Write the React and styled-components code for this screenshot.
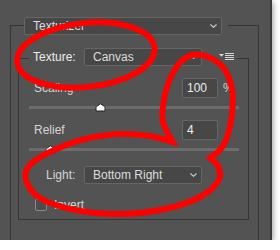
import React from 'react'
import styled, { createGlobalStyle } from 'styled-components'

const GlobalStyle = createGlobalStyle`
  body {
    margin: 0;
    background: #fff;
    font-family: "Liberation Sans", Arial, sans-serif;
  }
`

const LINE = '#363636'
const PANEL = '#535353'

const Panel = styled.div`
  position: relative;
  box-sizing: border-box;
  width: 272px;
  height: 240px;
  padding: 25px 0 0 10px;
  background: ${PANEL};
  border-right: 2px solid #3a3a3a;
  box-shadow: 1px 2px 6px rgba(0, 0, 0, 0.4);
  display: flex;
  flex-direction: column;
  overflow: hidden;
`

const Group = styled.div`
  box-sizing: border-box;
  width: ${p => p.$w}px;
  border: 1px solid ${LINE};
  display: flex;
  flex-direction: column;
  ${p => p.$open ? 'border-bottom: none; flex: 1;' : 'height: 162px; margin: 23px 0 0 7px;'}
`

const Legend = styled.div`
  align-self: flex-start;
  display: flex;
  align-items: center;
  background: ${PANEL};
  margin: ${p => p.$top}px 0 0 ${p => p.$left}px;
  padding: 0 ${p => p.$pr}px 0 ${p => p.$pl}px;
`

const Label = styled.span`
  width: ${p => p.$w}px;
  font-size: 12px;
  color: ${p => p.$bright ? '#ececec' : '#d4d4d4'};
  white-space: nowrap;
`

const Select = styled.div`
  box-sizing: border-box;
  width: ${p => p.$w}px;
  height: 18px;
  display: flex;
  align-items: center;
  justify-content: space-between;
  padding: 0 4px 0 8px;
  background: #474747;
  border: 1px solid #656565;
  border-radius: 2px;
  color: #dcdcdc;
  font-size: 12px;
  white-space: nowrap;
`

const MenuIcon = styled.svg`
  margin-left: 17px;
  display: block;
`

const ParamRow = styled.div`
  display: flex;
  align-items: center;
  height: 20px;
  margin-top: ${p => p.$mt}px;
  padding-left: 15px;
`

const ParamLabel = styled.span`
  flex: 1;
  font-size: 12px;
  color: #d4d4d4;
`

const NumberBox = styled.div`
  box-sizing: border-box;
  width: 36px;
  height: 20px;
  display: flex;
  align-items: center;
  padding-left: 4px;
  background: #474747;
  border: 1px solid #656565;
  border-radius: 1px;
  color: #ececec;
  font-size: 12px;
`

const Unit = styled.span`
  box-sizing: border-box;
  width: 30px;
  padding-left: 5px;
  font-size: 12px;
  color: #d4d4d4;
`

const Track = styled.div`
  position: relative;
  width: 210px;
  height: 3px;
  margin: ${p => p.$mt}px 0 0 10px;
  background: #6c6c6c;
`

const Thumb = styled.svg`
  position: absolute;
  top: -3px;
  left: ${p => p.$x}px;
`

const LightRow = styled.div`
  display: flex;
  align-items: center;
  margin-top: 15px;
  padding-left: 27px;
`

const CheckRow = styled.label`
  display: flex;
  align-items: center;
  gap: 7px;
  margin-top: 14px;
  padding-left: 16px;
  font-size: 12px;
  color: #d4d4d4;
`

const CheckBox = styled.span`
  box-sizing: border-box;
  width: 12px;
  height: 12px;
  border: 1px solid #8a8a8a;
  border-radius: 2px;
  background: #4d4d4d;
`

const Marks = styled.svg`
  position: absolute;
  left: 0;
  top: 0;
  pointer-events: none;
`

const Chevron = () => (
  <svg width="7" height="4" viewBox="0 0 7 4">
    <polyline points="0.5,0.5 3.5,3.3 6.5,0.5" fill="none" stroke="#cfcfcf" strokeWidth="1.1" />
  </svg>
)

const SliderThumb = ({ x }) => (
  <Thumb $x={x} width="11" height="9" viewBox="0 0 11 9">
    <path d="M1 8 L1 4.6 Q1 3.8 1.8 3.3 L5.5 0.8 L9.2 3.3 Q10 3.8 10 4.6 L10 8 Z" fill="#fff" stroke="#222" strokeWidth="1" />
  </Thumb>
)

// catmull-rom through points -> cubic segments
const smooth = pts => {
  let d = ''
  for (let i = 0; i < pts.length - 1; i++) {
    const p0 = pts[i - 1] || pts[i]
    const p1 = pts[i]
    const p2 = pts[i + 1]
    const p3 = pts[i + 2] || p2
    const c1 = [p1[0] + (p2[0] - p0[0]) / 6, p1[1] + (p2[1] - p0[1]) / 6].map(n => n.toFixed(1))
    const c2 = [p2[0] - (p3[0] - p1[0]) / 6, p2[1] - (p3[1] - p1[1]) / 6].map(n => n.toFixed(1))
    d += ` C${c1} ${c2} ${p2}`
  }
  return d
}

const lowerLoop = [
  [173, 142], [150, 136], [120, 134], [85, 139], [52, 151], [30, 165], [26, 180],
  [40, 198], [75, 210], [120, 214], [165, 209], [200, 197], [219, 180], [218, 166], [210, 158]
]
const upperLoop = [
  [210, 158], [220, 150], [227, 138], [232, 115], [232, 88], [222, 66], [202, 55],
  [184, 59], [171, 77], [164, 100], [163, 122], [173, 142]
]
const bubble = `M${lowerLoop[0]}${smooth(lowerLoop)}${smooth(upperLoop)}Z`

const App = () => (
  <>
    <GlobalStyle />
    <Panel>
      <Group $w={249} $open>
        <Legend $top={-9} $left={13} $pl={0} $pr={6}>
          <Select $w={198}>Texturizer<Chevron /></Select>
        </Legend>

        <Group $w={231}>
          <Legend $top={-11} $left={10} $pl={4} $pr={3}>
            <Label $w={51} $bright>Texture:</Label>
            <Select $w={118}>Canvas<Chevron /></Select>
            <MenuIcon width="15" height="8" viewBox="0 0 15 8">
              <polygon points="0,1 5,1 2.5,3.8" fill="#d8d8d8" />
              <g stroke="#d8d8d8" strokeWidth="1">
                <line x1="6" y1="0.5" x2="15" y2="0.5" />
                <line x1="6" y1="2.5" x2="15" y2="2.5" />
                <line x1="6" y1="4.5" x2="15" y2="4.5" />
                <line x1="6" y1="6.5" x2="15" y2="6.5" />
              </g>
            </MenuIcon>
          </Legend>

          <ParamRow $mt={12}>
            <ParamLabel>Scaling</ParamLabel>
            <NumberBox>100</NumberBox>
            <Unit>%</Unit>
          </ParamRow>
          <Track $mt={8}><SliderThumb x={66} /></Track>

          <ParamRow $mt={11}>
            <ParamLabel>Relief</ParamLabel>
            <NumberBox>4</NumberBox>
            <Unit />
          </ParamRow>
          <Track $mt={8}><SliderThumb x={16} /></Track>

          <LightRow>
            <Label $w={38}>Light:</Label>
            <Select $w={118}>Bottom Right<Chevron /></Select>
          </LightRow>

          <CheckRow>
            <CheckBox />
            Invert
          </CheckRow>
        </Group>
      </Group>

      <Marks width="272" height="240" viewBox="0 0 272 240">
        <g fill="none" stroke="#ff0000" strokeWidth="6" strokeLinejoin="miter">
          <ellipse cx="86" cy="55" rx="69" ry="32" transform="rotate(-6 86 55)" />
          <path d={bubble} />
        </g>
      </Marks>
    </Panel>
  </>
)

export default App
